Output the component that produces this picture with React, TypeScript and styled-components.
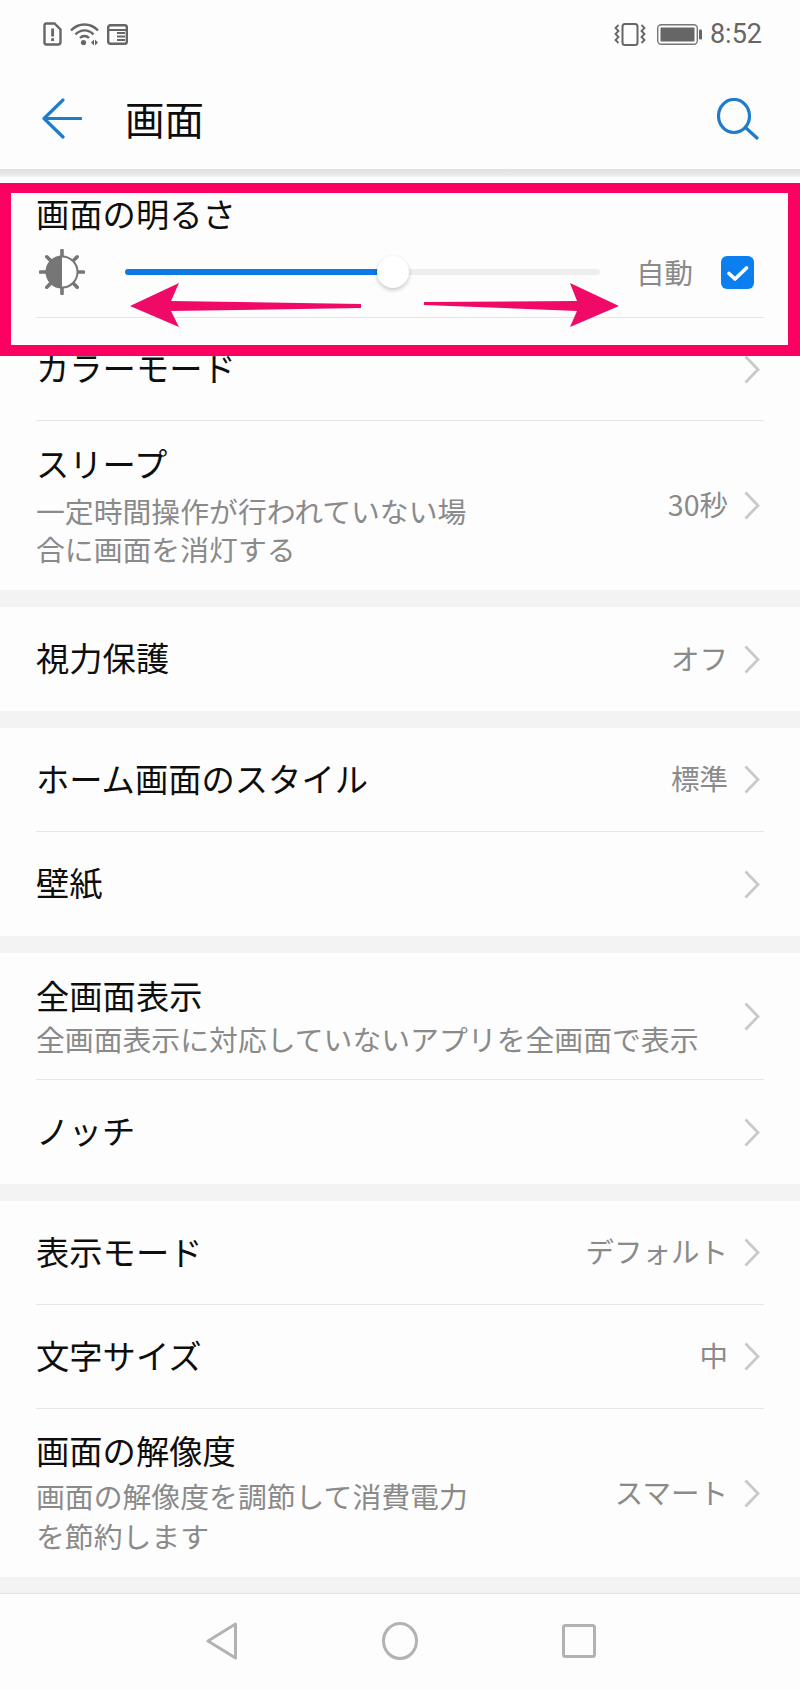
import React from "react";
import styled, { createGlobalStyle } from "styled-components";

const Global = createGlobalStyle`
  html, body { margin: 0; padding: 0; background: #fdfdfd; }
  body { font-family: "Noto Sans CJK JP", "Noto Sans", sans-serif; }
`;

const Page = styled.div`
  position: relative;
  width: 800px;
  height: 1689px;
  overflow: hidden;
  background: #fdfdfd;
  display: flex;
  flex-direction: column;
`;

const StatusBar = styled.div`
  height: 68px;
  padding: 0 38px 0 43px;
  display: flex;
  align-items: center;
  justify-content: space-between;
  color: #666666;
`;

const StatusGroup = styled.div<{ $gap: number }>`
  display: flex;
  align-items: center;
  gap: ${(p) => p.$gap}px;
`;

const Clock = styled.span`
  font-family: Roboto, "Liberation Sans", sans-serif;
  font-size: 27px;
  line-height: 34px;
  color: #666666;
`;

const AppBar = styled.header`
  height: 101px;
  padding: 0 40px 0 42px;
  display: flex;
  align-items: center;
  color: #1f7ccb;
`;

const AppTitle = styled.h1`
  margin: 0 0 2px 43px;
  flex: 1;
  font-size: 39.5px;
  line-height: 50px;
  font-weight: 400;
  color: #0c0c0c;
`;

const AppBarRule = styled.div`
  height: 8px;
  background: linear-gradient(#e2e2e2, #e8e8e8 70%, #f6f6f6);
`;

const Section = styled.section`
  display: flex;
  flex-direction: column;
  background: #fdfdfd;
`;

const SectionGap = styled.div<{ $h?: number }>`
  height: ${(p) => p.$h ?? 17}px;
  background: #f3f3f3;
`;

const Row = styled.div<{ $h: number; $divider?: boolean }>`
  height: ${(p) => p.$h}px;
  box-sizing: border-box;
  margin: 0 36px;
  padding-right: 4px;
  display: flex;
  align-items: center;
  justify-content: space-between;
  border-bottom: ${(p) => (p.$divider ? "1px solid #e6e6e6" : "none")};
`;

const Texts = styled.div`
  display: flex;
  flex-direction: column;
`;

const Title = styled.div`
  font-size: 33.3px;
  line-height: 40px;
  padding-bottom: 4px;
  color: #0e0e0e;
  white-space: nowrap;
`;

const Sub = styled.div<{ $width?: number; $leading: number; $top: number }>`
  margin-top: ${(p) => p.$top}px;
  max-width: ${(p) => p.$width ?? 700}px;
  font-size: 28.85px;
  line-height: ${(p) => p.$leading}px;
  color: #8a8a8a;
`;

const Trail = styled.div`
  display: flex;
  align-items: center;
  gap: 16px;
  white-space: nowrap;
`;

const Value = styled.span`
  margin-bottom: 3px;
  color: #8a8a8a;
  font-size: 28.5px;
  line-height: 40px;
`;

const Chevron = styled.svg`
  width: 16px;
  height: 29px;
  flex: none;
  color: #c9c9c9;
`;

const BrightnessRow = styled.div`
  height: 141px;
  box-sizing: border-box;
  margin: 0 36px;
  padding-top: 16px;
  border-bottom: 1px solid #e6e6e6;
`;

const Controls = styled.div`
  margin-top: 13px;
  height: 44px;
  display: flex;
  align-items: center;
`;

const SunIcon = styled.svg`
  width: 46px;
  height: 46px;
  margin-left: 3px;
  flex: none;
`;

const Slider = styled.div`
  position: relative;
  width: 475px;
  height: 6px;
  margin-left: 40px;
  border-radius: 3px;
  background: #eeeeee;
`;

const SliderFill = styled.div`
  height: 100%;
  border-radius: 3px;
  background: #0b78e3;
`;

const Thumb = styled.div`
  position: absolute;
  top: 50%;
  width: 32px;
  height: 32px;
  margin: -16px 0 0 -16px;
  border-radius: 50%;
  background: #ffffff;
  box-shadow: 0 2px 4px rgba(0, 0, 0, 0.22);
`;

const AutoLabel = styled.span`
  margin-left: 36px;
  font-size: 28.5px;
  line-height: 40px;
  color: #8a8a8a;
`;

const CheckBox = styled.svg`
  width: 33px;
  height: 33px;
  margin-left: 28px;
  flex: none;
`;

const NavGap = styled.div`
  height: 16px;
  background: #f3f3f3;
  border-bottom: 1px solid #e2e2e2;
`;

const NavBar = styled.nav`
  flex: 1;
  display: flex;
  padding: 28px 0 0 206px;
  gap: 144px;
  color: #b2b2b2;
`;

const Frame = styled.div`
  position: absolute;
  left: 0;
  top: 183px;
  width: 800px;
  height: 173px;
  box-sizing: border-box;
  border: solid #fb0060;
  border-width: 10px 12px 11px 11px;
  pointer-events: none;
`;

const Arrows = styled.svg`
  position: absolute;
  left: 0;
  top: 270px;
  width: 800px;
  height: 70px;
  pointer-events: none;
`;

const Chev = () => (
  <Chevron viewBox="0 0 16 29">
    <path d="M1.500 1.500 L14 14.500 L1.500 27.500" fill="none" stroke="currentColor" strokeWidth="2.800" />
  </Chevron>
);

export default function App() {
  return (
    <Page>
      <Global />
      <StatusBar>
        <StatusGroup $gap={8}>
          <svg width="19" height="24" viewBox="0 0 19 24">
            <path d="M3 1.500h8.500L17.500 7.500V20a2.500 2.500 0 0 1-2.500 2.500H3A2 2 0 0 1 1.500 20V3A2 2 0 0 1 3 1.500z" fill="none" stroke="#666" strokeWidth="2.400" />
            <rect x="8.200" y="6.500" width="2.800" height="8" fill="#666" />
            <rect x="8.200" y="16.200" width="2.800" height="2.800" fill="#666" />
          </svg>
          <svg width="29" height="24" viewBox="0 0 29 24">
            <g fill="none" stroke="#666" strokeWidth="2.400">
              <path d="M1 8.500C8.500 .5 20.500 .5 28 8.500" />
              <path d="M5.500 12.500C10.500 7 18.500 7 23.500 12.500" />
              <path d="M10 16C12.500 13.300 16.500 13.300 19 16" />
            </g>
            <circle cx="13.500" cy="20.500" r="2.600" fill="#666" />
            <path d="M21 20.500l3-3v6zM25 17.500l3 3-3 3z" fill="#666" />
          </svg>
          <svg width="21" height="21" viewBox="0 0 21 21">
            <rect x="1.200" y="1.200" width="18.600" height="18.600" rx="2" fill="none" stroke="#666" strokeWidth="2.400" />
            <path d="M1 6h19" stroke="#666" strokeWidth="2" />
            <path d="M10 9h8M10 12.500h8M10 16h8" stroke="#666" strokeWidth="1.800" />
          </svg>
        </StatusGroup>
        <StatusGroup $gap={8}>
          <svg width="32" height="23" viewBox="0 0 32 23" style={{ marginRight: 3 }}>
            <rect x="8.500" y="1" width="15" height="21" rx="2.500" fill="none" stroke="#666" strokeWidth="2" />
            <path d="M4.500 2l-3 3 3 3-3 3 3 3-3 3 3 3M27.500 2l3 3-3 3 3 3-3 3 3 3-3 3" fill="none" stroke="#666" strokeWidth="1.800" />
          </svg>
          <svg width="45" height="21" viewBox="0 0 45 21">
            <rect x=".7" y=".7" width="39.600" height="19.600" rx="3.500" fill="none" stroke="#777" strokeWidth="1.400" />
            <rect x="3.500" y="3.500" width="34" height="14" rx="1" fill="#666" />
            <rect x="42" y="5.500" width="3" height="10" rx="1" fill="#666" />
          </svg>
          <Clock>8:52</Clock>
        </StatusGroup>
      </StatusBar>

      <AppBar>
        <svg width="40" height="41" viewBox="0 0 40 41">
          <path d="M21 2 L2 20.500 L21 39 M2 20.500 H39" fill="none" stroke="currentColor" strokeWidth="3.200" strokeLinecap="round" strokeLinejoin="round" />
        </svg>
        <AppTitle>画面</AppTitle>
        <svg width="43" height="42" viewBox="0 0 43 42">
          <ellipse cx="17" cy="18" rx="15.500" ry="16.500" fill="none" stroke="currentColor" strokeWidth="3.200" />
          <path d="M29 30 L40 40" fill="none" stroke="currentColor" strokeWidth="3.200" strokeLinecap="round" />
        </svg>
      </AppBar>
      <AppBarRule />

      <Section>
        <BrightnessRow>
          <Title>画面の明るさ</Title>
          <Controls>
            <SunIcon viewBox="0 0 46 46">
              <g stroke="#767676" strokeWidth="3.600" strokeLinecap="round">
                <path d="M23 1.500V7M23 39V44.500M1.500 23H7M39 23H44.500M7.800 7.800L11.500 11.500M34.500 34.500L38.200 38.200M7.800 38.200L11.500 34.500M34.500 11.500L38.200 7.800" />
              </g>
              <circle cx="23" cy="23" r="15.500" fill="#ffffff" stroke="#767676" strokeWidth="2" />
              <path d="M23 7.500A15.500 15.500 0 0 0 23 38.500z" fill="#767676" />
            </SunIcon>
            <Slider>
              <SliderFill style={{ width: "56.4%" }} />
              <Thumb style={{ left: "56.4%" }} />
            </Slider>
            <AutoLabel>自動</AutoLabel>
            <CheckBox viewBox="0 0 33 33">
              <rect width="33" height="33" rx="6" fill="#0b7ff0" />
              <path d="M8 17.500 L14 23 L25.500 12" fill="none" stroke="#ffffff" strokeWidth="3.600" strokeLinecap="round" strokeLinejoin="round" />
            </CheckBox>
          </Controls>
        </BrightnessRow>
        <Row $h={103} $divider>
          <Title>カラーモード</Title>
          <Chev />
        </Row>
        <Row $h={169}>
          <Texts>
            <Title>スリープ</Title>
            <Sub $width={450} $leading={38} $top={5}>一定時間操作が行われていない場合に画面を消灯する</Sub>
          </Texts>
          <Trail><Value>30秒</Value><Chev /></Trail>
        </Row>
      </Section>
      <SectionGap />
      <Section>
        <Row $h={104}>
          <Title>視力保護</Title>
          <Trail><Value>オフ</Value><Chev /></Trail>
        </Row>
      </Section>
      <SectionGap />
      <Section>
        <Row $h={104} $divider>
          <Title>ホーム画面のスタイル</Title>
          <Trail><Value>標準</Value><Chev /></Trail>
        </Row>
        <Row $h={104}>
          <Title>壁紙</Title>
          <Chev />
        </Row>
      </Section>
      <SectionGap />
      <Section>
        <Row $h={127} $divider>
          <Texts>
            <Title>全画面表示</Title>
            <Sub $leading={38} $top={1}>全画面表示に対応していないアプリを全画面で表示</Sub>
          </Texts>
          <Chev />
        </Row>
        <Row $h={104}>
          <Title>ノッチ</Title>
          <Chev />
        </Row>
      </Section>
      <SectionGap />
      <Section>
        <Row $h={104} $divider>
          <Title>表示モード</Title>
          <Trail><Value>デフォルト</Value><Chev /></Trail>
        </Row>
        <Row $h={104} $divider>
          <Title>文字サイズ</Title>
          <Trail><Value>中</Value><Chev /></Trail>
        </Row>
        <Row $h={168}>
          <Texts>
            <Title>画面の解像度</Title>
            <Sub $width={450} $leading={40} $top={2}>画面の解像度を調節して消費電力を節約します</Sub>
          </Texts>
          <Trail><Value>スマート</Value><Chev /></Trail>
        </Row>
      </Section>
      <NavGap />
      <NavBar>
        <svg width="32" height="38" viewBox="0 0 32 38">
          <path d="M29.500 2 V36 L2 19 Z" fill="none" stroke="currentColor" strokeWidth="3" strokeLinejoin="round" />
        </svg>
        <svg width="36" height="38" viewBox="0 0 36 38">
          <ellipse cx="18" cy="19" rx="16.500" ry="17.500" fill="none" stroke="currentColor" strokeWidth="3" />
        </svg>
        <svg width="34" height="34" viewBox="0 0 34 34" style={{ marginTop: 2 }}>
          <rect x="1.500" y="1.500" width="31" height="31" rx="2" fill="none" stroke="currentColor" strokeWidth="3" />
        </svg>
      </NavBar>

      <Frame />
      <Arrows viewBox="0 270 800 70">
        <path d="M130 306 L179 283 L171 301 L361 304 L361 308 L171 311 L179 327 Z" fill="#f00a68" />
        <path d="M619 306 L570 283 L577 301 L424 302 L424 305 L577 311 L570 327 Z" fill="#f00a68" />
      </Arrows>
    </Page>
  );
}
